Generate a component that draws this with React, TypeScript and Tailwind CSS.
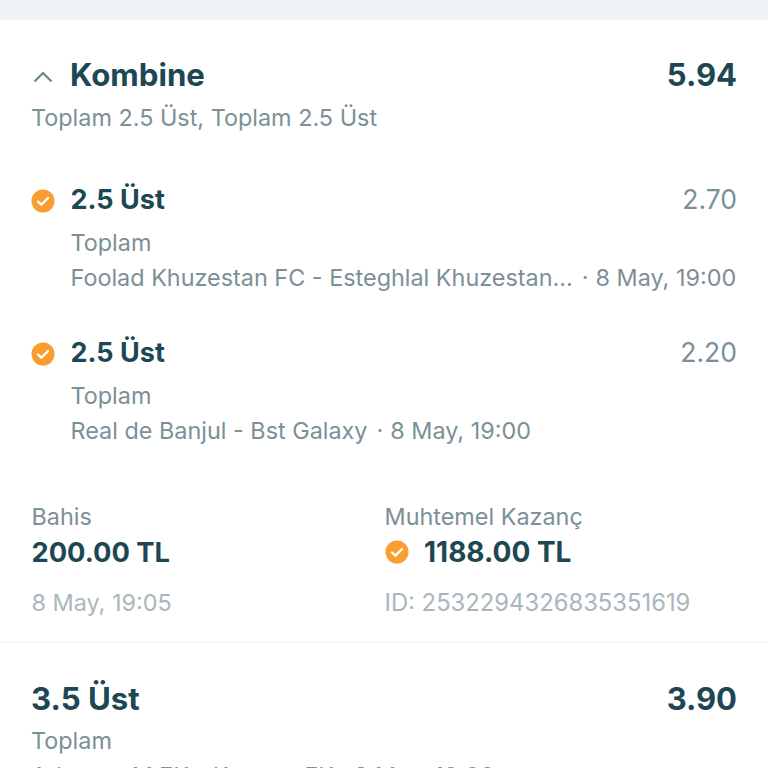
const font = { fontFamily: "Inter, sans-serif" };

function Check() {
  return (
    <svg width="24" height="24" viewBox="0 0 24 24" className="shrink-0">
      <circle cx="12" cy="12" r="11.5" fill="#f99d2e" />
      <path d="M7 12.5l3.4 3.2L17 9" fill="none" stroke="#fff" strokeWidth="2.4" strokeLinecap="round" strokeLinejoin="round" />
    </svg>
  );
}

function Selection({ odd, match, time, mt }: { odd: string; match: string; time: string; mt: string }) {
  return (
    <div className={`flex flex-col ${mt}`}>
      <div className="flex items-center justify-between h-[34px]">
        <div className="flex items-center gap-[15.5px]">
          <span className="mt-[2px] flex"><Check /></span>
          <span className="text-[27px] font-bold text-[#1c4753] leading-[34px]">2.5 Üst</span>
        </div>
        <span className="text-[26.5px] text-[#7b9097] leading-[32px] mb-[2px]">{odd}</span>
      </div>
      <div className="pl-[39.5px] mt-[8px] text-[23.4px] leading-[35px] text-[#7b9097]">
        <div>Toplam</div>
        <div className="flex whitespace-nowrap">
          <span>{match}</span>
          <span className="ml-[9px]">·</span>
          <span className="ml-[7px]">{time}</span>
        </div>
      </div>
    </div>
  );
}

export default function App() {
  return (
    <div style={font} className="w-[768px] h-[768px] overflow-hidden bg-white flex flex-col">
      <div className="h-[20px] bg-[#eff3f5] shrink-0" />
      <div className="px-[31px] pt-[35px] border-b border-[#eff1f2] h-[623px] shrink-0">
        <div className="flex items-center justify-between h-[40px]">
          <div className="flex items-center gap-[16px]">
            <svg width="22" height="20" viewBox="0 0 22 20" fill="none" className="shrink-0 ml-[1px] mt-[3px]">
              <path d="M2.5 14.5l8.5-8.5 8.5 8.5" stroke="#6f868d" strokeWidth="2.2" />
            </svg>
            <span className="text-[31.2px] font-bold text-[#1c4753] leading-[40px]">Kombine</span>
          </div>
          <span className="text-[31px] font-bold text-[#1c4753] leading-[40px]">5.94</span>
        </div>
        <div className="text-[23.4px] leading-[35px] text-[#7b9097] mt-[5px]">Toplam 2.5 Üst, Toplam 2.5 Üst</div>
        <Selection mt="mt-[48px]" odd="2.70" match="Foolad Khuzestan FC - Esteghlal Khuzestan..." time="8 May, 19:00" />
        <Selection mt="mt-[41px]" odd="2.20" match="Real de Banjul - Bst Galaxy" time="8 May, 19:00" />
        <div className="grid grid-cols-[353px_1fr] mt-[51px] pl-[0.5px]">
          <div>
            <div className="text-[23.4px] leading-[35px] text-[#7b9097]">Bahis</div>
            <div className="text-[27.3px] font-bold text-[#1c4753] leading-[34px] mt-[2px]">200.00 TL</div>
            <div className="text-[23.4px] leading-[35px] text-[#a9b7bc] mt-[15px]">8 May, 19:05</div>
          </div>
          <div>
            <div className="text-[23.4px] leading-[35px] text-[#7b9097]">Muhtemel Kazanç</div>
            <div className="flex items-center gap-[15.5px] h-[34px] mt-[1px]">
              <Check />
              <span className="text-[28px] font-bold text-[#1c4753] leading-[34px]">1188.00 TL</span>
            </div>
            <div className="text-[23.8px] leading-[35px] text-[#a9b7bc] mt-[16px]">ID: 2532294326835351619</div>
          </div>
        </div>
      </div>
      <div className="px-[31px] pt-[36px]">
        <div className="flex items-center justify-between h-[40px]">
          <span className="text-[31.2px] font-bold text-[#1c4753] leading-[40px]">3.5 Üst</span>
          <span className="text-[31px] font-bold text-[#1c4753] leading-[40px]">3.90</span>
        </div>
        <div className="text-[23.4px] leading-[35px] text-[#7b9097] mt-[4px]">Toplam</div>
        <div className="text-[23.4px] leading-[35px] text-[#7b9097]">Arbaeen M FK - Kerman FK · 8 May, 19:00</div>
      </div>
    </div>
  );
}
